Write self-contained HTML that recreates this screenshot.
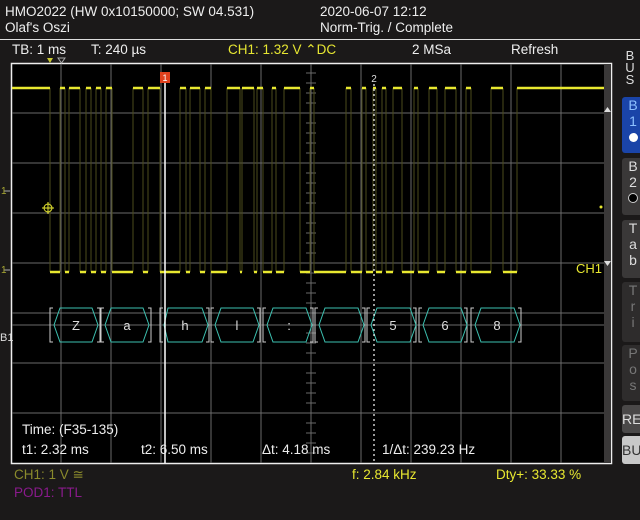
<!DOCTYPE html>
<html><head><style>
body{margin:0;width:640px;height:520px;background:#1b1919;overflow:hidden;font-family:"Liberation Sans",sans-serif;position:relative;color:#eee}
.t{position:absolute;font-size:13.5px;white-space:nowrap;line-height:1}
.btn{position:absolute;left:622px;width:22px;border-radius:3px;font-size:14px;line-height:16px;text-align:center;color:#ddd;padding-left:0}
</style></head><body>
<div class="t" style="left:5px;top:5px">HMO2022 (HW 0x10150000; SW 04.531)</div>
<div class="t" style="left:5px;top:21px">Olaf's Oszi</div>
<div class="t" style="left:320px;top:5px">2020-06-07 12:12</div>
<div class="t" style="left:320px;top:21px">Norm-Trig. / Complete</div>
<div style="position:absolute;left:0;top:39px;width:640px;height:1px;background:#ddd"></div>
<div class="t" style="left:12px;top:43px">TB: 1 ms</div>
<div class="t" style="left:91px;top:43px">T: 240 µs</div>
<div class="t" style="left:228px;top:43px;color:#e6e632">CH1: 1.32 V ⌃DC</div>
<div class="t" style="left:412px;top:43px">2 MSa</div>
<div class="t" style="left:511px;top:43px">Refresh</div>
<div class="t" style="left:625px;top:50px;width:10px;font-size:13px;line-height:12px;text-align:center;color:#ddd">B<br>U<br>S</div>
<div class="btn" style="top:97px;height:56px;background:#1a44a8;color:#8cc0ff">B<br>1<br><span style="display:inline-block;width:9px;height:9px;border-radius:50%;background:#fff"></span></div>
<div class="btn" style="top:158px;height:57px;background:#3a3838">B<br>2<br><span style="display:inline-block;width:8px;height:8px;border-radius:50%;background:#000;border:1px solid #ccc"></span></div>
<div class="btn" style="top:220px;height:58px;background:#3a3838">T<br>a<br>b</div>
<div class="btn" style="top:282px;height:60px;background:#2e2c2c;color:#777">T<br>r<br>i</div>
<div class="btn" style="top:345px;height:56px;background:#2e2c2c;color:#777">P<br>o<br>s</div>
<div class="btn" style="top:405px;height:28px;background:#4a4848;text-align:left;line-height:28px">RE</div>
<div class="btn" style="top:436px;height:28px;background:#c8c8c8;color:#333;text-align:left;line-height:28px">BU</div>
<svg style="position:absolute;left:0;top:0" width="640" height="520">
<rect x="11.5" y="63.5" width="600" height="400" fill="#000" stroke="#eee" stroke-width="1.5"/>
<rect x="604" y="64" width="7" height="399" fill="#3a3838"/>
<g stroke="#6a6a6a" stroke-width="1">
<path d="M61 64V463M111 64V463M161 64V463M211 64V463M261 64V463M311 64V463M361 64V463M411 64V463M461 64V463M511 64V463M561 64V463"/>
<path d="M12 113H604M12 163H604M12 213H604M12 263H604M12 313H604M12 363H604M12 413H604M12 325H604"/>
</g>
<path d="M306 73H316M306 83H316M306 93H316M306 103H316M306 123H316M306 133H316M306 143H316M306 153H316M306 173H316M306 183H316M306 193H316M306 203H316M306 223H316M306 233H316M306 243H316M306 253H316M306 273H316M306 283H316M306 293H316M306 303H316M306 333H316M306 343H316M306 353H316M306 373H316M306 383H316M306 393H316M306 403H316M306 423H316M306 433H316M306 443H316M306 453H316" stroke="#6a6a6a"/>
<g stroke="#4c4c1c" stroke-width="1">
<path d="M50 88V272M60 88V272M65 88V272M69 88V272M80 88V272M86 88V272M91 88V272M96 88V272M101 88V272M106 88V272M112 88V272M133 88V272M143 88V272M148 88V272M160 88V272M180 88V272M186 88V272M190 88V272M200 88V272M205 88V272M211 88V272M227 88V272M240 88V272M242 88V272M254 88V272M257 88V272M263 88V272M272 88V272M276 88V272M284 88V272M300 88V272M310 88V272M314 88V272M346 88V272M351 88V272M362 88V272M366 88V272M373 88V272M376 88V272M382 88V272M386 88V272M393 88V272M402 88V272M414 88V272M418 88V272M429 88V272M437 88V272M445 88V272M456 88V272M466 88V272M471 88V272M491 88V272M503 88V272M517 88V272"/>
</g>
<g stroke="#e8e830" stroke-width="2.5">
<path d="M12 88H50M60 88H65M69 88H80M86 88H91M96 88H101M106 88H112M133 88H143M148 88H160M180 88H186M190 88H200M205 88H211M227 88H240M242 88H254M257 88H263M272 88H276M284 88H300M310 88H314M346 88H351M362 88H366M373 88H376M382 88H386M393 88H402M414 88H418M429 88H437M445 88H456M466 88H471M491 88H503M517 88H604"/>
<path d="M50 272H60M65 272H69M80 272H86M91 272H96M101 272H106M112 272H133M143 272H148M160 272H180M186 272H190M200 272H205M211 272H227M240 272H242M254 272H257M263 272H272M276 272H284M300 272H310M314 272H346M351 272H362M366 272H373M376 272H382M386 272H393M402 272H414M418 272H429M437 272H445M456 272H466M471 272H491M503 272H517"/>
</g>
<g fill="none" stroke-width="1">
<g stroke="#ccc">
<path d="M53 308H50V342H53M97 308H100V342H97M104 308H101V342H104M148 308H151V342H148M163 308H160V342H163M206 308H209V342H206M214 308H211V342H214M257 308H260V342H257M266 308H263V342H266M310 308H313V342H310M318 308H315V342H318M362 308H365V342H362M370 308H367V342H370M413 308H416V342H413M422 308H419V342H422M464 308H467V342H464M474 308H471V342H474M518 308H521V342H518"/>
</g>
<g stroke="#3cc0b0">
<path d="M60 308H92L98 325L92 342H60L54 325Z M111 308H143L149 325L143 342H111L105 325Z M168 308H202L208 325L202 342H168L164 325Z M221 308H253L259 325L253 342H221L215 325Z M273 308H306L312 325L306 342H273L267 325Z M325 308H358L364 325L358 342H325L319 325Z M377 308H410L416 325L410 342H377L371 325Z M429 308H461L467 325L461 342H429L423 325Z M481 308H514L520 325L514 342H481L475 325Z"/>
</g>
</g>
<g fill="#ddd" font-family="Liberation Sans,sans-serif" font-size="13" text-anchor="middle">
<text x="76" y="330">Z</text><text x="127" y="330">a</text><text x="185" y="330">h</text><text x="237" y="330">l</text><text x="289" y="330">:</text><text x="393" y="330">5</text><text x="445" y="330">6</text><text x="497" y="330">8</text>
</g>
<path d="M165 76V463" stroke="#fff" stroke-width="1.5"/>
<path d="M374 84V463" stroke="#fff" stroke-width="1.2" stroke-dasharray="2 3"/>
<rect x="160" y="72" width="10" height="11" fill="#e0401c"/>
<text x="165" y="81" fill="#fff" font-size="9" text-anchor="middle" font-family="Liberation Sans">1</text>
<text x="374" y="82" fill="#ddd" font-size="10" text-anchor="middle" font-family="Liberation Sans">2</text>
<path d="M47 58h6l-3 5z" fill="#c8c832"/><path d="M58 58h7l-3.5 5z" fill="none" stroke="#aaa"/>
<circle cx="48" cy="208" r="4" fill="none" stroke="#e8e830"/><path d="M42 208h12M48 202v12" stroke="#e8e830"/>
<path d="M4 191h6M4 270h6" stroke="#aaa"/>
<text x="1" y="194" fill="#a8a832" font-size="10" font-family="Liberation Sans">1</text>
<text x="1" y="273" fill="#a8a832" font-size="10" font-family="Liberation Sans">1</text>
<text x="0" y="341" fill="#ddd" font-size="11" font-family="Liberation Sans">B1</text>
<path d="M604 112l3.5-5 3.5 5z M604 261l3.5 5 3.5-5z" fill="#ddd"/>
<circle cx="601" cy="207" r="1.5" fill="#e8e830"/>
</svg>
<div class="t" style="left:576px;top:262px;color:#e8e830;font-size:13px">CH1</div>
<div class="t" style="left:22px;top:423px">Time: (F35-135)</div>
<div class="t" style="left:22px;top:443px">t1: 2.32 ms</div>
<div class="t" style="left:141px;top:443px">t2: 6.50 ms</div>
<div class="t" style="left:262px;top:443px">Δt: 4.18 ms</div>
<div class="t" style="left:382px;top:443px">1/Δt: 239.23 Hz</div>
<div class="t" style="left:14px;top:468px;color:#8a8a2c">CH1: 1 V ≅</div>
<div class="t" style="left:352px;top:468px;color:#e8e830">f: 2.84 kHz</div>
<div class="t" style="left:496px;top:468px;color:#e8e830">Dty+: 33.33 %</div>
<div class="t" style="left:14px;top:486px;color:#8a1a8c">POD1: TTL</div>
</body></html>
